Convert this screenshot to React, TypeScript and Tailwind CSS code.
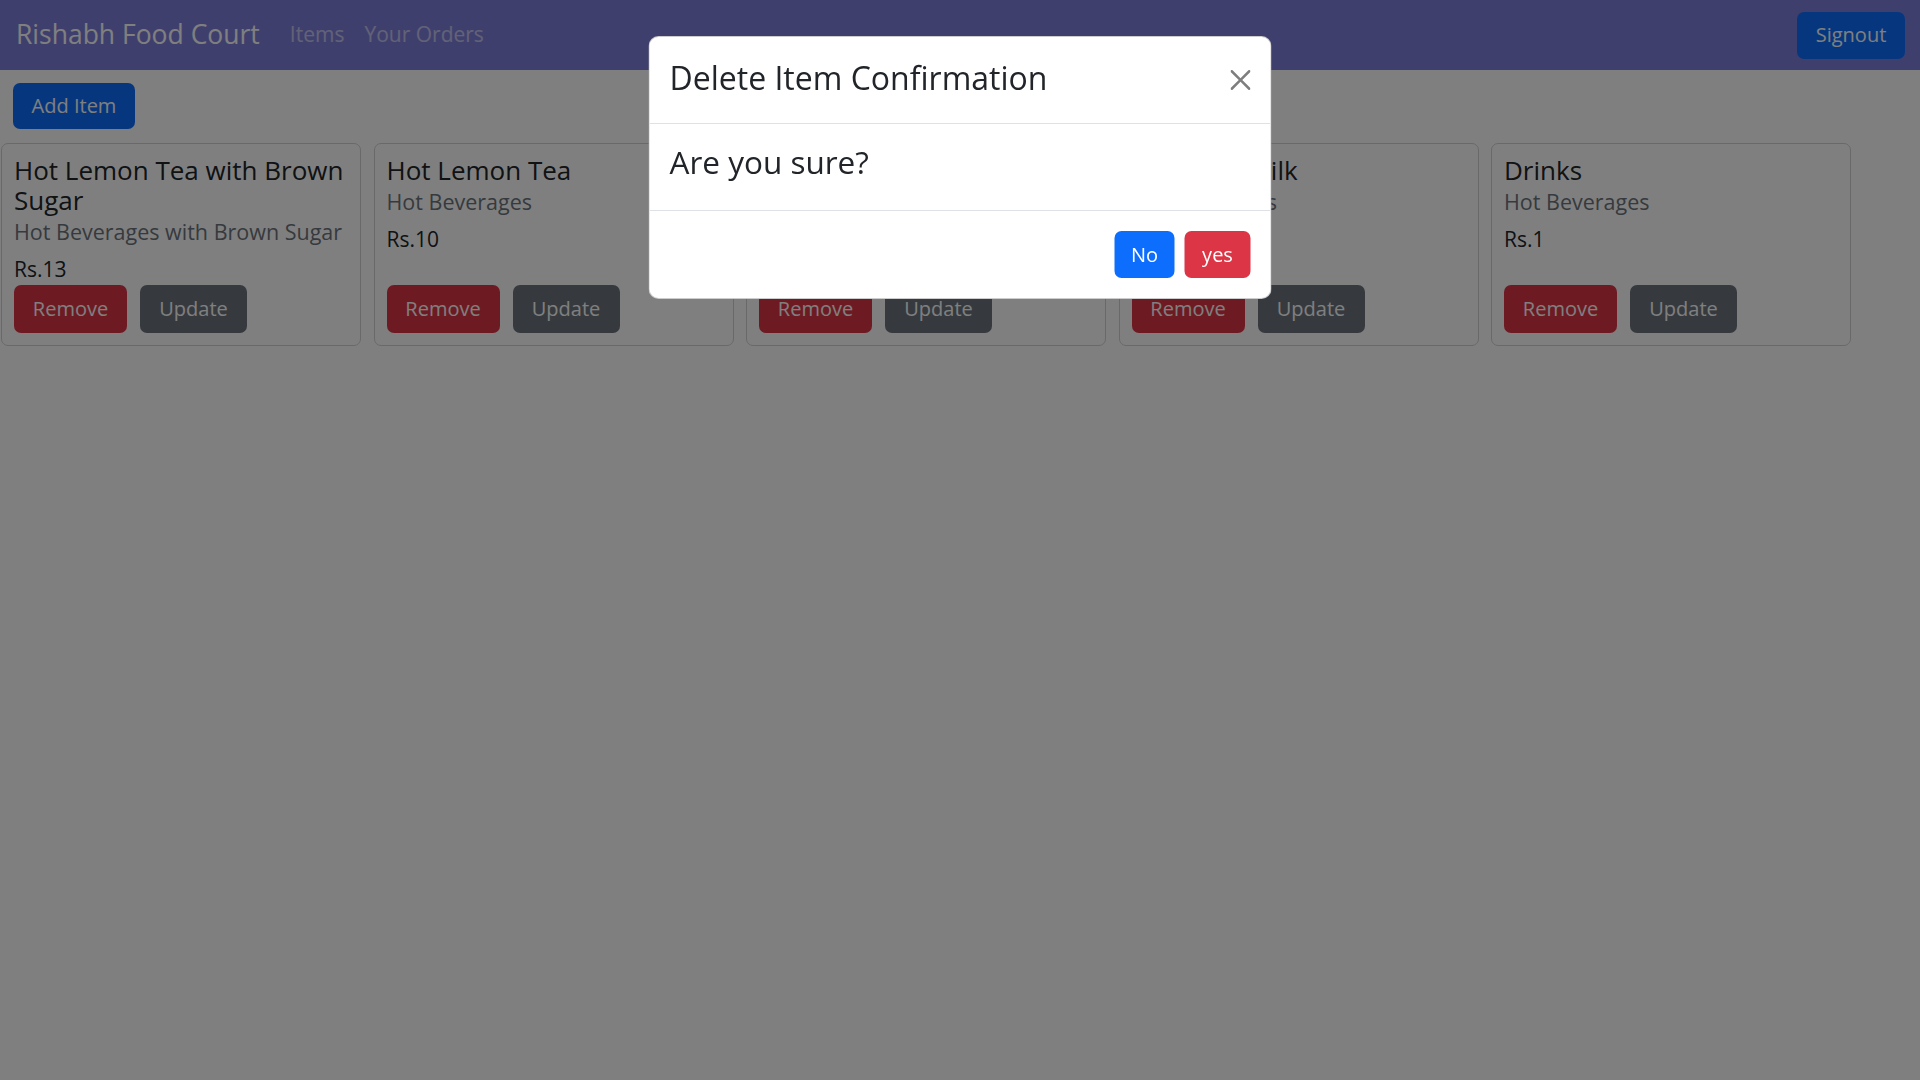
import React from 'react';

interface FoodItem {
    name: string;
    category: string;
    price: number;
}

const items: FoodItem[] = [
    { name: 'Hot Lemon Tea with Brown Sugar', category: 'Hot Beverages with Brown Sugar', price: 13 },
    { name: 'Hot Lemon Tea', category: 'Hot Beverages', price: 10 },
    { name: 'Hot Coffee', category: 'Hot Beverages', price: 15 },
    { name: 'Turmeric Milk', category: 'Hot Beverages', price: 12 },
    { name: 'Drinks', category: 'Hot Beverages', price: 1 },
];

const ItemCard: React.FC<{ item: FoodItem }> = ({ item }) => (
    <div className="w-[360px] shrink-0 flex flex-col pt-[11px] px-[12px] pb-[12px] bg-white border border-[#d3d3d3] rounded-[7px]">
        <h5 className="text-[26px] leading-[30px] text-[#212529] font-normal">{item.name}</h5>
        <h6 className="mt-[5px] text-[21.5px] leading-[24px] text-[#6c757d] font-normal">{item.category}</h6>
        <p className="mt-[10px] mb-[1px] text-[21px] leading-[30px] text-[#212529]">Rs.{item.price}</p>

        {/* Actions */}
        <div className="mt-auto flex gap-[13px]">
            <button className="w-[113px] h-[48px] rounded-[7px] bg-[#dc3545] text-white text-[20px]">Remove</button>
            <button className="w-[107px] h-[48px] rounded-[7px] bg-[#6c757d] text-white text-[20px]">Update</button>
        </div>
    </div>
);

const CloseIcon = () => (
    <svg viewBox="0 0 16 16" className="w-[20px] h-[20px] opacity-50" fill="#000">
        <path d="M.293.293a1 1 0 0 1 1.414 0L8 6.586 14.293.293a1 1 0 1 1 1.414 1.414L9.414 8l6.293 6.293a1 1 0 0 1-1.414 1.414L8 9.414l-6.293 6.293a1 1 0 0 1-1.414-1.414L6.586 8 .293 1.707a1 1 0 0 1 0-1.414z" />
    </svg>
);

export default function App() {
    return (
        <div className="min-h-screen bg-white font-['Open_Sans',sans-serif]">
            {/* Navbar */}
            <nav className="h-[70px] bg-[#7e7edc] flex items-center justify-between pl-[16px] pr-[15px]">
                <div className="flex items-center">
                    <span className="text-[26.5px] text-white mr-[20px]">Rishabh Food Court</span>
                    <a className="px-[10px] text-[21px] text-white/55">Items</a>
                    <a className="px-[10px] text-[21px] text-white/55">Your Orders</a>
                </div>
                <button className="w-[108px] h-[47px] rounded-[7px] bg-[#0d6efd] text-white text-[20px]">Signout</button>
            </nav>

            <div className="pt-[13px] pl-[13px]">
                <button className="w-[122px] h-[46px] rounded-[7px] bg-[#0d6efd] text-white text-[20px]">Add Item</button>
            </div>

            <div className="mt-[14px] pl-[1px] flex gap-[12.5px]">
                {items.map((item) => (
                    <ItemCard key={item.name} item={item} />
                ))}
            </div>

            {/* Backdrop */}
            <div className="fixed inset-0 bg-black/50" />

            {/* Modal */}
            <div className="fixed top-[36px] left-1/2 -translate-x-1/2 w-[623px] bg-white border border-black/20 rounded-[10px]">
                <div className="flex items-center justify-between px-[20px] pt-[18px] pb-[22px] border-b border-[#dee2e6]">
                    <h4 className="text-[32px] leading-[46px] text-[#212529]">Delete Item Confirmation</h4>
                    <div className="pt-[4px]">
                        <CloseIcon />
                    </div>
                </div>
                <div className="px-[20px] pt-[15px] pb-[25px] border-b border-[#dee2e6]">
                    <h4 className="text-[31.5px] leading-[46px] text-[#212529]">Are you sure?</h4>
                </div>
                <div className="flex justify-end gap-[10px] px-[20px] py-[20px]">
                    <button className="w-[60px] h-[47px] rounded-[7px] bg-[#0d6efd] text-white text-[20px]">No</button>
                    <button className="w-[66px] h-[47px] rounded-[7px] bg-[#dc3545] text-white text-[20px]">yes</button>
                </div>
            </div>
        </div>
    );
}
